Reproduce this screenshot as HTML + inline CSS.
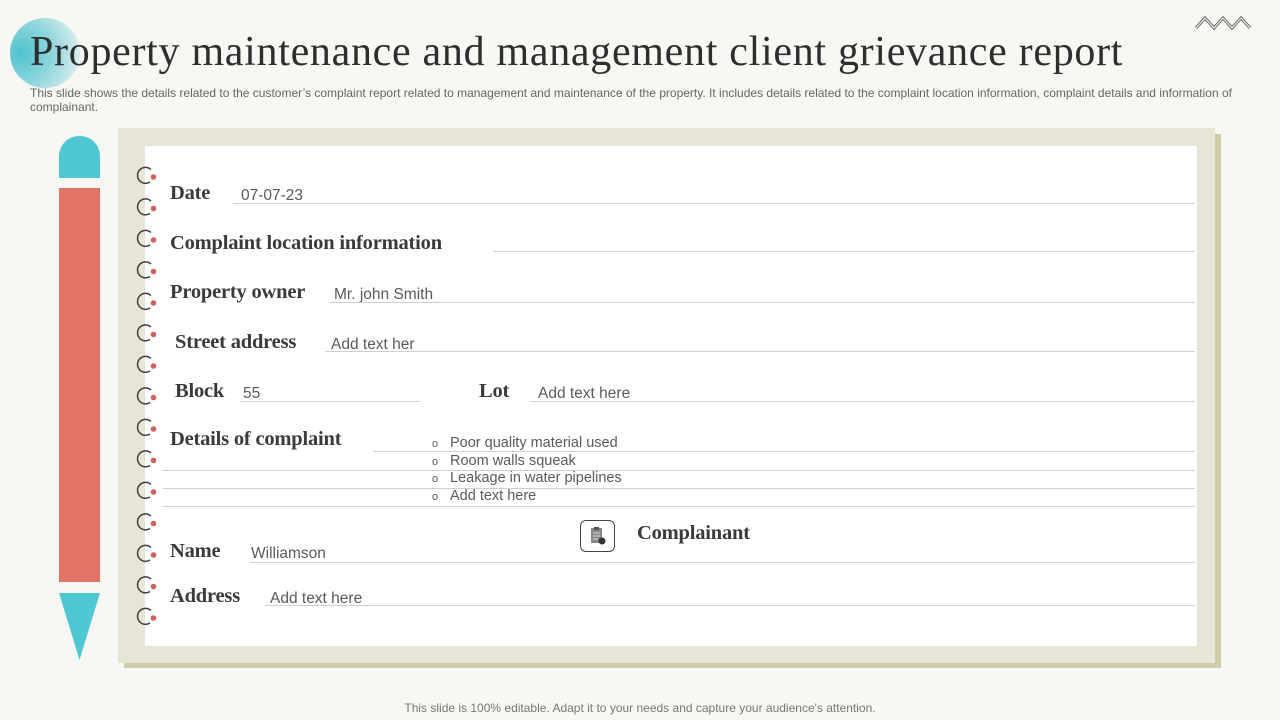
<!DOCTYPE html>
<html><head><meta charset="utf-8"><style>
*{margin:0;padding:0;box-sizing:border-box}
body{width:1280px;height:720px;background:#f7f7f3;position:relative;overflow:hidden;font-family:"Liberation Sans",sans-serif}
.a{position:absolute}
.h{position:absolute;font-family:"Liberation Serif",serif;font-weight:bold;font-size:20.5px;color:#3a3a3a;letter-spacing:-0.2px;white-space:nowrap}
.v{position:absolute;font-size:15.5px;color:#5a5a5a;white-space:nowrap}
.l{position:absolute;height:1px;background:#cfcfcf}
.b{position:absolute;font-size:14.5px;color:#5a5a5a;white-space:nowrap}
.b:before{content:"o";font-size:11px;position:absolute;left:-18px;top:3px}
</style></head><body>
<div class="a" style="left:10px;top:18px;width:70px;height:70px;border-radius:50%;background:radial-gradient(circle at 15% 50%,#4fc3cf 0%,#8dd5dc 45%,#f2f5f2 100%)"></div>
<div class="a" style="left:30px;top:28px;font-family:'Liberation Serif',serif;font-size:42px;color:#2e2e2e;letter-spacing:0.7px;white-space:nowrap">Property maintenance and management client grievance report</div>
<div class="a" style="left:30px;top:86px;width:1225px;font-size:12px;line-height:14px;color:#666">This slide shows the details related to the customer’s complaint report related to management and maintenance of the property. It includes details related to the complaint location information, complaint details and information of complainant.</div>
<svg class="a" style="left:1194px;top:15px" width="60" height="16"><path d="M2 13 L11 3 L20 13 L29 3 L38 13 L47 3 L56 13" fill="none" stroke="#666" stroke-width="3"/><path d="M2 13 L11 3 L20 13 L29 3 L38 13 L47 3 L56 13" fill="none" stroke="#fff" stroke-width="1"/></svg>
<div class="a" style="left:59px;top:136px;width:41px;height:42px;background:#4fc8d4;border-radius:20px 20px 0 0"></div>
<div class="a" style="left:59px;top:188px;width:41px;height:394px;background:#e27565"></div>
<svg class="a" style="left:59px;top:593px" width="41" height="68"><polygon points="0,0 41,0 20.5,67" fill="#4fc8d4"/></svg>
<div class="a" style="left:124px;top:134px;width:1097px;height:534px;background:#cdcda8"></div>
<div class="a" style="left:118px;top:128px;width:1097px;height:535px;background:#e6e5d6"></div>
<div class="a" style="left:145px;top:146px;width:1052px;height:500px;background:#fff"></div>
<svg class="a" style="left:130px;top:160px" width="32" height="470">
<defs><g id="rg"><path d="M21 9.5 A8 8 0 1 0 20 22" fill="none" stroke="#3f3f3f" stroke-width="1.5"/><circle cx="23.5" cy="17" r="2.8" fill="#d0605a"/></g></defs>
<use href="#rg" y="0"/><use href="#rg" y="31.5"/><use href="#rg" y="63"/><use href="#rg" y="94.5"/><use href="#rg" y="126"/><use href="#rg" y="157.5"/><use href="#rg" y="189"/><use href="#rg" y="220.5"/><use href="#rg" y="252"/><use href="#rg" y="283.5"/><use href="#rg" y="315"/><use href="#rg" y="346.5"/><use href="#rg" y="378"/><use href="#rg" y="409.5"/><use href="#rg" y="441"/>
</svg>
<div class="h" style="left:170px;top:182px">Date</div><div class="v" style="left:241px;top:187px">07-07-23</div><div class="l" style="left:233px;top:203px;width:962px"></div>
<div class="h" style="left:170px;top:232px">Complaint location information</div><div class="l" style="left:493px;top:251px;width:702px"></div>
<div class="h" style="left:170px;top:281px">Property owner</div><div class="v" style="left:334px;top:286px">Mr. john Smith</div><div class="l" style="left:330px;top:302px;width:865px"></div>
<div class="h" style="left:175px;top:331px">Street address</div><div class="v" style="left:331px;top:336px">Add text her</div><div class="l" style="left:325px;top:351px;width:870px"></div>
<div class="h" style="left:175px;top:380px">Block</div><div class="v" style="left:243px;top:385px">55</div><div class="l" style="left:240px;top:401px;width:180px"></div>
<div class="h" style="left:479px;top:380px">Lot</div><div class="v" style="left:538px;top:385px">Add text here</div><div class="l" style="left:530px;top:401px;width:665px"></div>
<div class="h" style="left:170px;top:428px">Details of complaint</div>
<div class="b" style="left:450px;top:435px">Poor quality material used</div>
<div class="b" style="left:450px;top:453px">Room walls squeak</div>
<div class="b" style="left:450px;top:470px">Leakage in water pipelines</div>
<div class="b" style="left:450px;top:488px">Add text here</div>
<div class="l" style="left:373px;top:451px;width:822px"></div>
<div class="l" style="left:163px;top:470px;width:1032px"></div>
<div class="l" style="left:163px;top:488px;width:1032px"></div>
<div class="l" style="left:163px;top:506px;width:1032px"></div>
<div class="a" style="left:580px;top:520px;width:35px;height:32px;border:1.3px solid #444;border-radius:6px"></div>
<svg class="a" style="left:588px;top:526px" width="20" height="20"><rect x="3" y="2" width="11" height="15" fill="#888"/><rect x="6" y="1" width="5" height="3" fill="#555"/><path d="M5 7h7M5 10h7M5 13h5" stroke="#ddd" stroke-width="1"/><circle cx="14" cy="15" r="3.5" fill="#333"/></svg>
<div class="h" style="left:637px;top:522px">Complainant</div>
<div class="h" style="left:170px;top:540px">Name</div><div class="v" style="left:251px;top:545px">Williamson</div><div class="l" style="left:250px;top:562px;width:945px"></div>
<div class="h" style="left:170px;top:585px">Address</div><div class="v" style="left:270px;top:590px">Add text here</div><div class="l" style="left:265px;top:605px;width:930px"></div>
<div class="a" style="left:0;top:701px;width:1280px;text-align:center;font-size:12px;color:#777">This slide is 100% editable. Adapt it to your needs and capture your audience's attention.</div>
</body></html>
